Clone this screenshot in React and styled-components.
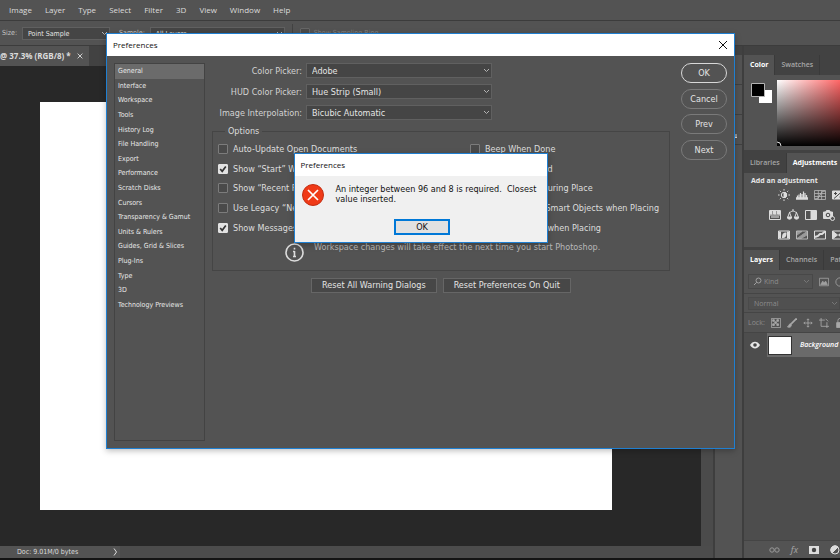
import React from 'react';
import styled, {createGlobalStyle, css} from "styled-components";


const GlobalStyle = createGlobalStyle
    `
      * {
        box-sizing: border-box;
      }

      html, body, #root {
        height: 100%;
      }

      body {
        margin: 0;
        overflow: hidden;
        background: #535353;
        color: #dcdcdc;
        font: 9px/12px "DejaVu Sans Condensed", "DejaVu Sans", sans-serif;
      }

      button, input, select {
        font: inherit;
        color: inherit;
        margin: 0;
      }

      svg {
        display: block;
        flex: none;
      }
    `

const smallText = css
    `
      font-size: 7px;
    `
const systemText = css
    `
      font-family: "Open Sans", "Noto Sans", sans-serif;
      font-size: 8px;
    `
const panelText = css
    `
      font-family: "Open Sans", "Noto Sans", sans-serif;
      font-size: 7px;
    `

const Screen = styled.div
    `
      position: relative;
      display: flex;
      flex-direction: column;
      height: 100%;
      overflow: hidden;
      white-space: nowrap;
      border-bottom: 2px solid #141414;
    `
const MenuBar = styled.nav
    `
      ${systemText};
      display: flex;
      gap: 13px;
      height: 21px;
      flex: none;
      padding: 4px 9px;
      border-bottom: 1px solid #3c3c3c;
    `
const MenuItem = styled.button
    `
      padding: 0;
      border: none;
      background: none;
    `
const OptionsBar = styled.div
    `
      ${smallText};
      display: flex;
      align-items: center;
      gap: 5px;
      height: 25px;
      flex: none;
      padding-left: 2px;
      border-bottom: 1px solid #3c3c3c;
    `
const OptionLabel = styled.label
    `
      display: flex;
      align-items: center;
      gap: 4px;
      margin-left: ${props => props.$space || 0}px;
      color: ${props => props.$dim ? '#808080' : '#c4c4c4'};
    `
const Divider = styled.div
    `
      width: 1px;
      height: 18px;
      margin: 0 2px;
      background-color: #424242;
    `

// Select with own arrow
const SelectWrap = styled.div
    `
      display: grid;
      align-items: center;
      width: ${props => props.$width};

      > * {
        grid-area: 1 / 1;
      }

      > svg {
        justify-self: end;
        margin-right: 2px;
        pointer-events: none;
      }
    `
const SelectBox = styled.select
    `
      appearance: none;
      width: 100%;
      height: ${props => props.$tall ? 15 : 13}px;
      padding: 0 12px 0 5px;
      border: 1px solid ${props => props.$dim ? '#4a4a4a' : '#606060'};
      border-radius: 0;
      background-color: ${props => props.$dim ? '#505050' : '#454545'};
      color: ${props => props.$dim ? '#8c8c8c' : '#e4e4e4'};
      outline: none;
    `

const Workspace = styled.div
    `
      display: flex;
      flex: 1;
      min-height: 0;
    `
const DocumentArea = styled.main
    `
      display: flex;
      flex-direction: column;
      flex: 1;
      min-width: 0;
    `
const DocumentTabs = styled.div
    `
      height: 20px;
      flex: none;
      display: flex;
      background-color: #424242;
    `
const DocumentTab = styled.div
    `
      ${systemText};
      display: flex;
      align-items: center;
      gap: 6px;
      padding: 0 6px 0 0;
      background-color: #535353;
      font-weight: 700;
    `
const TabClose = styled.button
    `
      display: flex;
      padding: 0;
      border: none;
      background: none;
    `
const CanvasRow = styled.div
    `
      display: flex;
      flex: 1;
      min-height: 0;
    `
const Pasteboard = styled.div
    `
      flex: 1;
      padding: 36px 89px 36px 40px;
      background-color: #282828;
    `
const Artboard = styled.div
    `
      height: 100%;
      background-color: #fff;
    `
const ScrollTrack = styled.div
    `
      width: 12px;
      background-color: #4b4b4b;
    `
const StatusBar = styled.footer
    `
      ${smallText};
      display: flex;
      height: 12px;
      flex: none;
      background-color: #4c4c4c;
    `
const StatusText = styled.div
    `
      display: flex;
      align-items: center;
      justify-content: space-between;
      width: 120px;
      padding: 0 2px 0 17px;
      background-color: #535353;
    `

// Right side
const Dock = styled.div
    `
      width: 31px;
      flex: none;
      padding-top: 9px;
      border: solid #3e3e3e;
      border-width: 0 2px;
      background: linear-gradient(#424242 9px, transparent 9px);
    `
const DockCell = styled.div
    `
      display: flex;
      align-items: flex-end;
      justify-content: flex-end;
      height: 30px;
      padding: 0 5px 5px 0;
      border-bottom: 1px solid #404040;
    `
const Panels = styled.aside
    `
      ${panelText};
      display: flex;
      flex-direction: column;
      width: 96px;
      flex: none;
      padding-top: 9px;
      overflow: hidden;
      background: linear-gradient(#424242 9px, transparent 9px);
    `
const PanelTabs = styled.div
    `
      display: flex;
      height: 20px;
      flex: none;
      background-color: #424242;
    `
const PanelTab = styled.button
    `
      padding: 0 6px;
      flex: none;
      border: none;
      border-right: 1px solid #3a3a3a;
      background-color: ${props => props.$active ? '#535353' : 'transparent'};
      color: ${props => props.$active ? '#fff' : '#a6a6a6'};
      font-weight: ${props => props.$active ? 700 : 600};
    `
const PanelBody = styled.section
    `
      display: flex;
      flex: none;
      gap: ${props => props.$gap || 0}px;
      flex-direction: ${props => props.$column ? 'column' : 'row'};
      height: ${props => props.$height}px;
      padding: ${props => props.$pad || 0};
      border-bottom: 3px solid #424242;
    `
const ColorField = styled.div
    `
      flex: 1;
      display: flex;
      align-items: flex-end;
      background: linear-gradient(to top, #000, transparent), linear-gradient(to right, #fff, #f00 105px);
    `
const AdjustTitle = styled.div
    `
      font-weight: 700;
      padding-left: 7px;
      color: #e6e6e6;
    `
const IconRows = styled.div
    `
      display: flex;
      flex-direction: column;
      gap: 8px;
    `
const IconRow = styled.div
    `
      display: flex;
      gap: 6px;
      padding-left: ${props => props.$indent}px;
    `
const LayerBar = styled.div
    `
      display: flex;
      align-items: center;
      gap: 6px;
      height: ${props => props.$height}px;
      padding-left: 4px;
      flex: none;
      color: #8c8c8c;
      border-bottom: 1px solid #454545;
    `
const KindBox = styled.div
    `
      display: flex;
      align-items: center;
      width: 65px;
      padding-left: 4px;
      flex: none;
      border: 1px solid #484848;

      ${SelectBox} {
        padding-left: 2px;
        border: none;
        background: none;
      }
    `
const LayerRow = styled.div
    `
      display: flex;
      align-items: center;
      height: 24px;
      flex: none;
      background: linear-gradient(to right, #4d4d4d 23px, #6a6a6a 23px);
      padding-left: 6px;
      gap: 8px;
      font-weight: 600;
      font-style: italic;
      color: #fff;
    `
const Thumb = styled.div
    `
      width: 24px;
      height: 19px;
      flex: none;
      background-color: #fff;
      border: 1px solid #333;
    `
const LayerSpace = styled.div
    `
      flex: 1;
      background-color: #4d4d4d;
    `
const LayerTools = styled.div
    `
      display: flex;
      align-items: center;
      justify-content: flex-end;
      gap: 11px;
      height: 18px;
      flex: none;
      border-top: 1px solid #454545;
      color: #a8a8a8;
      font-size: 9px;
    `

// Preferences window
const Overlay = styled.div
    `
      position: absolute;
      inset: 33px 105px auto 106px;
    `
const windowFrame = css
    `
      border: 1px solid #1f7fd1;
      box-shadow: 0 2px 6px rgba(0, 0, 0, 0.25);
    `
const Dialog = styled.div
    `
      ${windowFrame};
      background-color: #535353;
    `
const TitleBar = styled.header
    `
      ${systemText};
      display: flex;
      align-items: center;
      justify-content: space-between;
      height: 22px;
      padding: 0 6px;
      background-color: #fff;
      color: #111;
    `
const CloseButton = styled.button
    `
      display: flex;
      padding: 0;
      border: none;
      background: none;
    `
const DialogBody = styled.div
    `
      display: flex;
      gap: 7px;
      padding: 7px;
    `
const Sidebar = styled.div
    `
      width: 91px;
      height: 378px;
      flex: none;
      border: 1px solid #434343;
    `
const SideList = styled.div
    `
      display: grid;
      grid-auto-rows: 1fr;
      height: 248px;
    `
const SideItem = styled.button
    `
      ${smallText};
      padding: 0 3px;
      border: none;
      background-color: ${props => props.$active ? '#6b6b6b' : 'transparent'};
      color: #e8e8e8;
      line-height: 10px;
      text-align: left;
    `
const Form = styled.form
    `
      flex: 1;
      min-width: 0;
    `
const Fields = styled.div
    `
      display: grid;
      grid-template-columns: 90px 186px;
      gap: 6px 4px;
      align-items: center;
    `
const FieldLabel = styled.label
    `
      text-align: right;
      color: #d2d2d2;
    `
const Options = styled.fieldset
    `
      margin: 5px 0 0;
      height: 146px;
      min-width: 0;
      padding: 1px 5px 0;
      border: 1px solid #454545;
    `
const Legend = styled.legend
    `
      margin-left: 7px;
      padding: 0 3px;
      line-height: 13px;
    `
const CheckGrid = styled.div
    `
      display: grid;
      grid-template-columns: 252px 1fr;
      grid-auto-rows: 1fr;
      height: 99px;
    `
const CheckLabel = styled.label
    `
      display: flex;
      align-items: center;
      gap: 5px;
      min-width: 0;
      color: #dedede;
    `
const CheckMark = styled.span
    `
      display: grid;

      > * {
        grid-area: 1 / 1;
      }

      > svg {
        pointer-events: none;
      }
    `
const CheckInput = styled.input
    `
      appearance: none;
      width: 10px;
      height: 10px;
      border: 1px solid ${props => props.$dim ? '#666' : '#7c7c7c'};
      border-radius: 1px;
      background-color: #4a4a4a;

      &:checked {
        background-color: #e2e2e2;
        border-color: #e2e2e2;
      }
    `
const Note = styled.div
    `
      display: flex;
      gap: 10px;
      padding: 3px 0 0 67px;
      color: #b8b8b8;

      > svg {
        margin-top: 2px;
      }
    `
const ResetRow = styled.div
    `
      display: flex;
      justify-content: center;
      gap: 6px;
      margin-top: 7px;
    `
const ResetButton = styled.button
    `
      height: 15px;
      padding: 0 10px;
      border: 1px solid #666;
      background-color: #474747;
      color: #e4e4e4;
      line-height: 13px;
    `
const Actions = styled.div
    `
      display: flex;
      flex-direction: column;
      justify-content: space-between;
      width: 50px;
      height: 97px;
      flex: none;
      padding-left: 4px;
    `
const PillButton = styled.button
    `
      height: 20px;
      padding: 0;
      border: ${props => props.$primary ? '1px solid #d8d8d8' : '1px solid #7a7a7a'};
      border-radius: 10px;
      background: none;
      color: #e4e4e4;
    `

// Error message
const Alert = styled.div
    `
      ${windowFrame};
      position: absolute;
      top: 120px;
      left: 50%;
      width: 254px;
      transform: translateX(-50%);
      background-color: #f0f0f0;
      color: #111;
    `
const AlertBody = styled.div
    `
      display: grid;
      grid-template-columns: 22px 1fr;
      gap: 13px 12px;
      padding: 8px 4px 7px 7px;
      line-height: 10px;
      white-space: pre-wrap;
    `
const AlertText = styled.p
    `
      margin: 0;
    `
const AlertButton = styled.button
    `
      grid-column: 1 / -1;
      justify-self: center;
      width: 56px;
      height: 16px;
      padding: 0;
      border: 2px solid #0078d7;
      background-color: #e1e1e1;
      color: #111;
    `


const menu = ['Image', 'Layer', 'Type', 'Select', 'Filter', '3D', 'View', 'Window', 'Help']

const sections = [
    'General', 'Interface', 'Workspace', 'Tools', 'History Log', 'File Handling', 'Export', 'Performance',
    'Scratch Disks', 'Cursors', 'Transparency & Gamut', 'Units & Rulers', 'Guides, Grid & Slices', 'Plug-Ins',
    'Type', '3D', 'Technology Previews'
]

const fields = [
    {id: 'picker', label: 'Color Picker:', value: 'Adobe'},
    {id: 'hud', label: 'HUD Color Picker:', value: 'Hue Strip (Small)'},
    {id: 'interpolation', label: 'Image Interpolation:', value: 'Bicubic Automatic'}
]

const checks = [
    {text: 'Auto-Update Open Documents', on: false},
    {text: 'Beep When Done', on: false},
    {text: 'Show “Start” Workspace When No Documents Are Open', on: true},
    {text: 'Export Clipboard', on: true},
    {text: 'Show “Recent Files” Workspace When Opening a File', on: false},
    {text: 'Resize Image During Place', on: true},
    {text: 'Use Legacy “New Document” Interface', on: false},
    {text: 'Always Create Smart Objects when Placing', on: true},
    {text: 'Show Messages', on: true},
    {text: 'Skip Transform when Placing', on: false}
]


const Cross = ({size, width = 1, color = 'currentColor'}) => (
    <svg width={size} height={size} viewBox="0 0 10 10" stroke={color} strokeWidth={width} fill="none">
        <path d="M1 1l8 8M9 1l-8 8"/>
    </svg>
)

const Arrow = ({color = '#b4b4b4'}) => (
    <svg width="7" height="5" viewBox="0 0 7 5" stroke={color} fill="none">
        <path d="M1 1l2.5 2.5L6 1"/>
    </svg>
)

const Select = ({id, value, width, tall, dim, label}) => (
    <SelectWrap $width={width}>
        <SelectBox id={id} $tall={tall} $dim={dim} aria-label={label}>
            <option>{value}</option>
        </SelectBox>
        <Arrow color={dim ? '#777' : '#b4b4b4'}/>
    </SelectWrap>
)

const Check = ({text, on}) => (
    <CheckLabel>
        <CheckMark>
            <CheckInput type="checkbox" defaultChecked={on}/>
            {on && <svg width="10" height="10" stroke="#333" strokeWidth="1.7" fill="none"><path d="M2.2 5l2 2.3L7.8 2.6"/></svg>}
        </CheckMark>
        {text}
    </CheckLabel>
)

// all adjustment icons share the 12x12 box
const Icon = ({children, size = 12, color = '#dcdcdc'}) => (
    <svg width={size} height={size} viewBox="0 0 12 12" fill="none" stroke={color} color={color}>{children}</svg>
)

const Frame = () => <path d="M.5 2h11v8H.5z"/>

const AdjustmentIcons = () => (
    <IconRows>
        <IconRow $indent={34}>
            <Icon>
                <circle cx="6" cy="6" r="2.7"/>
                <path d="M6 3.3a2.7 2.7 0 0 1 0 5.4z" fill="currentColor"/>
                <path d="M6 0v1.6M6 10.4V12M0 6h1.6M10.4 6H12M1.8 1.8l1 1M9.2 9.2l1 1M10.2 1.8l-1 1M2.8 9.2l-1 1"/>
            </Icon>
            <Icon>
                <path d="M0 9.5h12" strokeWidth="2.5"/>
                <path d="M1.5 10V6.5M3 10V5.5M4.5 10V4M6 10V5M7.5 10V2.5M9 10V4M10.5 10V6" strokeWidth="1.2"/>
            </Icon>
            <Icon color="#b8b8b8">
                <path d="M.5 1.5h11v9H.5zM4.3 1.5v9M7.6 1.5v9M.5 4.5h11M.5 7.5h11" strokeWidth=".8"/>
                <path d="M1 10c6 0 4-8 10-8"/>
            </Icon>
            <Icon>
                <path d="M.5 2h11v8H.5z" fill="currentColor"/>
                <path d="M2 9.5l8-7M2 4.5h3M3.5 3v3M7.5 8h3" stroke="#444"/>
            </Icon>
        </IconRow>
        <IconRow $indent={25}>
            <Icon>
                <path d="M.5 1.5h11v9H.5z"/>
                <path d="M1 2h2v3H1zM4.5 2H7v3H4.5zM8.5 2H11v3H8.5z" fill="currentColor"/>
                <path d="M2 8h8" strokeWidth="2" stroke="#a0a0a0"/>
                <path d="M.5 6h11"/>
            </Icon>
            <Icon>
                <path d="M2 3.5C4 3.5 4 2 6 2s2 1.5 4 1.5M6 0v2M2.5 3.5L.8 8M2.5 3.5L4.3 8M9.5 3.5L7.8 8M9.5 3.5L11.3 8"/>
                <path d="M.3 8h4.4a2.2 2.2 0 0 1-4.4 0zM7.3 8h4.4a2.2 2.2 0 0 1-4.4 0z" fill="currentColor"/>
            </Icon>
            <Icon>
                <path d="M.5 1.5h11v9H.5z"/>
                <path d="M6 2h5v8H6z" fill="currentColor"/>
            </Icon>
            <Icon>
                <path d="M.5 3h2l1-1.5h3l1 1.5h2v6.5h-9z" fill="currentColor"/>
                <circle cx="5" cy="6" r="1.8" stroke="#444"/>
                <circle cx="9.5" cy="9.5" r="2" fill="#535353"/>
            </Icon>
            <Icon>
                <circle cx="6" cy="6" r="4"/>
            </Icon>
        </IconRow>
        <IconRow $indent={34}>
            <Icon>
                <Frame/>
                <path d="M1 2.5h2v7H1zM9 2.5h2v7H9z" fill="currentColor" stroke="none"/>
                <path d="M4 9c4 0 4.500-2 4.500-5.500C5 3.500 4 5 4 9z" fill="currentColor" stroke="none"/>
            </Icon>
            <Icon color="#b8b8b8">
                <Frame/>
                <path d="M1 9.5L11 2.5V6L5 9.5zM1 6l5-3.5H1z" fill="currentColor" opacity=".7"/>
            </Icon>
            <Icon>
                <Frame/>
                <path d="M1 8l3-1 2-2 2 0 3-2.5" strokeWidth="2"/>
            </Icon>
            <Icon>
                <Frame/>
                <path d="M1 2.5L5.5 6 1 9.5zM11 2.5L6.5 6 11 9.5z" fill="currentColor"/>
            </Icon>
        </IconRow>
    </IconRows>
)


const Preferences = () => (
    <Overlay>
        <Dialog role="dialog" aria-label="Preferences">
            <TitleBar>
                Preferences
                <CloseButton aria-label="Close"><Cross size={10}/></CloseButton>
            </TitleBar>
            <DialogBody>
                <Sidebar>
                    <SideList>
                        {
                            sections.map((e, id) => {
                                return <SideItem key={id} $active={id === 0}>{e}</SideItem>
                            })
                        }
                    </SideList>
                </Sidebar>
                <Form>
                    <Fields>
                        {
                            fields.map(e => (
                                <React.Fragment key={e.id}>
                                    <FieldLabel htmlFor={e.id}>{e.label}</FieldLabel>
                                    <Select id={e.id} value={e.value} width="100%" tall/>
                                </React.Fragment>
                            ))
                        }
                    </Fields>
                    <Options>
                        <Legend>Options</Legend>
                        <CheckGrid>
                            {checks.map(e => <Check key={e.text} {...e}/>)}
                        </CheckGrid>
                        <Note>
                            <svg width="19" height="19" fill="none" stroke="#dcdcdc" strokeWidth="1.6">
                                <circle cx="9.5" cy="9.5" r="8.5"/>
                                <path d="M9.5 8v6M9.5 4.7v1.8M8 8.5h1.5M8 13.5h3"/>
                            </svg>
                            Workspace changes will take effect the next time you start Photoshop.
                        </Note>
                    </Options>
                    <ResetRow>
                        <ResetButton type="button">Reset All Warning Dialogs</ResetButton>
                        <ResetButton type="button">Reset Preferences On Quit</ResetButton>
                    </ResetRow>
                </Form>
                <Actions>
                    <PillButton $primary>OK</PillButton>
                    <PillButton>Cancel</PillButton>
                    <PillButton>Prev</PillButton>
                    <PillButton>Next</PillButton>
                </Actions>
            </DialogBody>
        </Dialog>
        <Alert role="alertdialog" aria-label="Error">
            <TitleBar>Preferences</TitleBar>
            <AlertBody>
                <svg width="22" height="22" fill="none">
                    <circle cx="11" cy="11" r="10.5" fill="#f03a17" stroke="#c22e12"/>
                    <path d="M6 6l10 10M16 6L6 16" stroke="#fff" strokeWidth="1.7"/>
                </svg>
                <AlertText>{'An integer between 96 and 8 is required.  Closest value inserted.'}</AlertText>
                <AlertButton>OK</AlertButton>
            </AlertBody>
        </Alert>
    </Overlay>
)


const App = () => {
    return (
        <Screen>
            <GlobalStyle/>
            <MenuBar>
                {menu.map(e => <MenuItem key={e}>{e}</MenuItem>)}
            </MenuBar>
            <OptionsBar>
                <OptionLabel htmlFor="size">Size:</OptionLabel>
                <Select id="size" value="Point Sample" width="88px"/>
                <OptionLabel htmlFor="sample" $space={4}>Sample:</OptionLabel>
                <Select id="sample" value="All Layers" width="135px"/>
                <Divider/>
                <OptionLabel $dim>
                    <CheckInput type="checkbox" $dim/>
                    Show Sampling Ring
                </OptionLabel>
            </OptionsBar>
            <Workspace>
                <DocumentArea>
                    <DocumentTabs>
                        <DocumentTab>
                            @ 37.3% (RGB/8) *
                            <TabClose aria-label="Close tab"><Cross size={6} width={1.5}/></TabClose>
                        </DocumentTab>
                    </DocumentTabs>
                    <CanvasRow>
                        <Pasteboard>
                            <Artboard/>
                        </Pasteboard>
                        <ScrollTrack/>
                    </CanvasRow>
                    <StatusBar>
                        <StatusText>
                            Doc: 9.01M/0 bytes
                            <svg width="5" height="8" stroke="#dcdcdc" fill="none"><path d="M1 .5L3.5 4 1 7.5"/></svg>
                        </StatusText>
                    </StatusBar>
                </DocumentArea>
                <Dock>
                    <DockCell/>
                    <DockCell/>
                    <DockCell>
                        <svg width="4" height="10" stroke="#dcdcdc" fill="none"><path d="M0 8.5h4M1 1v5M3 5v3"/></svg>
                    </DockCell>
                </Dock>
                <Panels>
                    <PanelTabs>
                        <PanelTab $active>Color</PanelTab>
                        <PanelTab>Swatches</PanelTab>
                    </PanelTabs>
                    <PanelBody $height={78} $gap={5} $pad="5px 0 4px 7px">
                        <svg width="21" height="23">
                            <path d="M8 10h13v13H8z" fill="#fff"/>
                            <path d="M.5 3.5h13v13H.5z" fill="#000" stroke="#b4b4b4"/>
                        </svg>
                        <ColorField>
                            <svg width="5" height="5" fill="none" stroke="#ddd"><circle cx="0" cy="5" r="4"/></svg>
                        </ColorField>
                    </PanelBody>
                    <PanelTabs>
                        <PanelTab>Libraries</PanelTab>
                        <PanelTab $active>Adjustments</PanelTab>
                    </PanelTabs>
                    <PanelBody $column $height={77} $gap={2} $pad="2px 0 0">
                        <AdjustTitle>Add an adjustment</AdjustTitle>
                        <AdjustmentIcons/>
                    </PanelBody>
                    <PanelTabs>
                        <PanelTab $active>Layers</PanelTab>
                        <PanelTab>Channels</PanelTab>
                        <PanelTab>Paths</PanelTab>
                    </PanelTabs>
                    <LayerBar $height={24}>
                        <KindBox>
                            <svg width="9" height="9" fill="none" stroke="#a0a0a0"><circle cx="5.5" cy="3.5" r="2.5"/><path d="M3.7 5.3L1 8"/></svg>
                            <Select label="Filter kind" value="Kind" width="50px" dim/>
                        </KindBox>
                        <Icon size={10} color="#a0a0a0">
                            <path d="M.5 1.5h11v9H.5z"/>
                            <path d="M2 9l2.5-4L6 7l2-2 2 4z" fill="currentColor"/>
                        </Icon>
                        <Icon size={10} color="#a0a0a0"><circle cx="6" cy="6" r="5"/></Icon>
                    </LayerBar>
                    <LayerBar $height={19}>
                        <Select label="Blend mode" value="Normal" width="100%" dim/>
                    </LayerBar>
                    <LayerBar $height={20}>
                        Lock:
                        <Icon size={10} color="#a8a8a8">
                            <path d="M.5.5h11v11H.5z"/>
                            <path d="M2 2h2v2H2zM7 2h2v2H7zM4.5 4.5h2v2h-2zM2 7h2v2H2zM7 7h2v2H7z" fill="currentColor"/>
                        </Icon>
                        <Icon size={10} color="#a8a8a8">
                            <path d="M11.5.5L5 7" strokeWidth="2"/>
                            <path d="M5 7c-3-1-2 3-4.5 3.5C3 12 6 11 5 7z" fill="currentColor"/>
                        </Icon>
                        <Icon size={10} color="#a8a8a8">
                            <path d="M6 1v10M1 6h10M4.5 2.5L6 1l1.5 1.5M4.5 9.5L6 11l1.5-1.5M2.5 4.5L1 6l1.5 1.5M9.5 4.5L11 6 9.5 7.5"/>
                        </Icon>
                        <Icon size={10} color="#a8a8a8">
                            <path d="M0 2.5h7M2.5 0v10H12M9.5 5v7M8 1l3 3"/>
                        </Icon>
                        <Icon size={10} color="#a8a8a8">
                            <path d="M2 5.5h8v6H2z" fill="currentColor"/>
                            <path d="M3.5 5V3a2.5 2.5 0 0 1 5 0v2"/>
                        </Icon>
                    </LayerBar>
                    <LayerRow>
                        <svg width="10" height="8" viewBox="0 0 10 8">
                            <path d="M0 4c2.5-4.5 7.5-4.5 10 0-2.5 4.5-7.5 4.5-10 0z" fill="#e6e6e6"/>
                            <circle cx="5" cy="4" r="1.8" fill="#444"/>
                        </svg>
                        <Thumb/>
                        Background
                    </LayerRow>
                    <LayerSpace/>
                    <LayerTools>
                        <svg width="11" height="8" fill="none" stroke="#999"><circle cx="3" cy="4" r="2.2"/><circle cx="8" cy="4" r="2.2"/></svg>
                        <em>fx</em>
                        <svg width="10" height="8"><path d="M0 0h10v8H0z" fill="#dcdcdc"/><circle cx="5" cy="4" r="2.2" fill="#444"/></svg>
                        <svg width="10" height="10" fill="none" stroke="#dcdcdc"><circle cx="5" cy="5" r="4"/><path d="M8 2L2 8A4 4 0 0 1 8 2z" fill="#dcdcdc"/></svg>
                    </LayerTools>
                </Panels>
            </Workspace>
            <Preferences/>
        </Screen>
    )
};

export default App;
